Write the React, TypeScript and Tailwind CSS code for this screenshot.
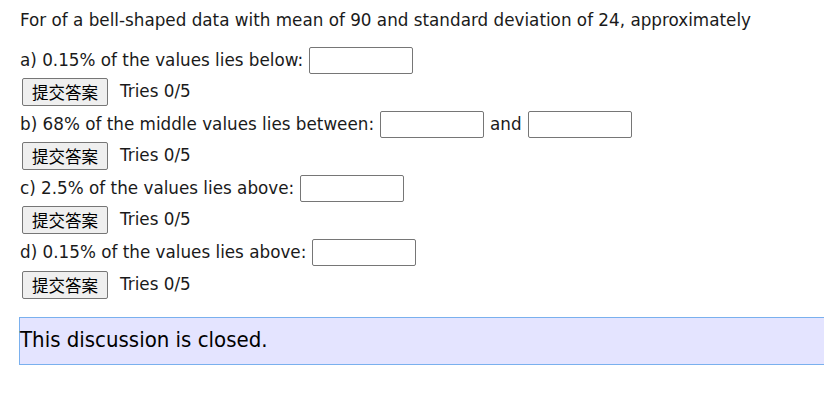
import React from "react";

const font = { fontFamily: '"DejaVu Sans", "Noto Sans CJK SC", sans-serif' };

function Answer() {
  return (
    <input
      type="text"
      className="h-[27px] w-[104px] rounded-[2px] border border-[#767676] bg-white align-middle"
    />
  );
}

function Submit() {
  return (
    <div className="mt-[4px] flex items-center gap-3">
      <button className="h-[28px] w-[86px] rounded-[2px] border border-[#767676] bg-[#efefef] text-[16.5px] leading-none text-black [font-family:'Noto_Sans_CJK_SC',sans-serif]">
        提交答案
      </button>
      <span>Tries 0/5</span>
    </div>
  );
}

function Part({ children }: { children: React.ReactNode }) {
  return (
    <div className="mt-[5px] flex items-center gap-[6px]">{children}</div>
  );
}

export default function App() {
  return (
    <div className="min-h-[418px] overflow-hidden bg-white pt-[9px] text-[16.8px] text-[#1a1a1a]" style={font}>
      <div className="pl-[20px]">
        <p className="leading-[22px]">
          For of a bell-shaped data with mean of 90 and standard deviation of 24, approximately
        </p>
        <div className="mt-[16px]">
          <Part>
            <span>a) 0.15% of the values lies below:</span>
            <Answer />
          </Part>
          <div className="pl-[2px]">
            <Submit />
          </div>
          <Part>
            <span>b) 68% of the middle values lies between:</span>
            <Answer />
            <span>and</span>
            <Answer />
          </Part>
          <div className="pl-[2px]">
            <Submit />
          </div>
          <Part>
            <span>c) 2.5% of the values lies above:</span>
            <Answer />
          </Part>
          <div className="pl-[2px]">
            <Submit />
          </div>
          <Part>
            <span>d) 0.15% of the values lies above:</span>
            <Answer />
          </Part>
          <div className="pl-[2px] pt-[1px]">
            <Submit />
          </div>
        </div>
      </div>
      <div className="ml-[19px] mt-[18px] h-[48px] border border-r-0 border-[#7ab0ee] bg-[#e4e4ff] pt-[5px] text-[22px] text-black [font-family:'DejaVu_Sans_Condensed',sans-serif]">
        This discussion is closed.
      </div>
    </div>
  );
}
